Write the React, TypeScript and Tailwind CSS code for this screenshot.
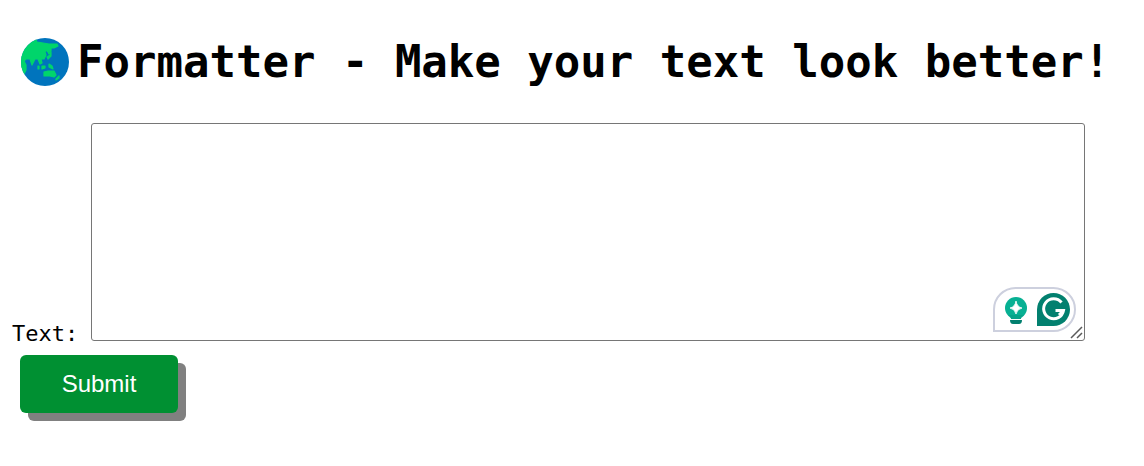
export default function App() {
  return (
    <main className="min-h-screen bg-white px-3 pt-8 text-black font-['DejaVu_Sans_Mono',monospace]">
      <h1 className="flex items-center gap-2 pl-[9px] text-[44px] leading-[60px] font-bold whitespace-nowrap">
        <svg className="size-12 shrink-0" viewBox="0 0 48 48" aria-hidden="true">
          <clipPath id="globe">
            <circle cx="24" cy="24" r="24" />
          </clipPath>
          <circle cx="24" cy="24" r="24" fill="#0074bd" />
          <g clipPath="url(#globe)" fill="#00d56b" stroke="#00d56b" strokeWidth="1.2" strokeLinejoin="round">
            <path d="M0 0H14L16 4L22 5L28 6L36 6L37 8L33 10L30 10L30 13L28 16L27 14L25 12L24 14L25 17L23 21L20 21L21 25L19 26L17 21L14 21L11 27L9 21L5 21L3 23L5 27L5 32L3 36L0 34Z" />
            <path d="M30 14L30 18L27 21L26 19L29 17Z" />
            <path d="M17 28H18V31H17ZM21 28H24V30L21 31ZM28 26L31 28L32 31L28 29Z" />
            <path d="M23 34L27 33L33 33L35 37L33 39L29 38L23 38Z" />
            <path d="M35 41L38 38L38 40L35 42Z" />
          </g>
        </svg>
        <span>Formatter - Make your text look better!</span>
      </h1>
      <form className="pt-[31px]" onSubmit={(event) => event.preventDefault()}>
        <div className="flex items-end pr-[47px]">
          <label htmlFor="text" className="w-[79px] shrink-0 text-[22px] leading-[14px]">
            Text:
          </label>
          <div className="relative flex-1">
            <textarea
              id="text"
              className="block h-[218px] w-full resize-none rounded-[3px] border border-[#767676] bg-white p-2 text-[22px] outline-none"
            />
            <div className="absolute right-[9px] bottom-[9px] flex h-[45px] w-[83px] items-center gap-[9px] rounded-t-[23px] rounded-br-[23px] border-2 border-[#cdd0de] bg-white pl-[9px]">
              <svg className="h-[28px] w-[24px]" viewBox="0 0 24 28" aria-hidden="true">
                <circle cx="12" cy="12" r="11" fill="#07b093" />
                <path d="M4 19H20Q17 20 17 23H7Q7 20 4 19Z" fill="#07a389" />
                <path d="M12 5Q13 11 18 12Q13 13 12 18Q11 13 6 12Q11 11 12 5Z" fill="white" stroke="white" strokeWidth="0.8" strokeLinejoin="round" />
                <path d="M6 24H18Q18 28 15 28H9Q6 28 6 24Z" fill="#02806f" />
              </svg>
              <svg className="size-[33px]" viewBox="0 0 33 33" aria-hidden="true">
                <path d="M0 33V16.500A16.500 16.500 0 1 1 16.500 33Z" fill="#02806f" />
                <path d="M24.500 9.500A10 10 0 1 0 26.500 17.500H18.500M22 22L26 18" fill="none" stroke="white" strokeWidth="3" />
              </svg>
            </div>
            <svg className="pointer-events-none absolute right-0 bottom-0 size-4" viewBox="0 0 16 16" aria-hidden="true">
              <path d="M2 13L13 2M8 13L13 8" fill="none" stroke="#5a5a5a" strokeWidth="1.500" />
            </svg>
          </div>
        </div>
        <button
          type="submit"
          className="mt-[14px] ml-2 h-[58px] w-[158px] cursor-pointer rounded-md bg-[#009032] font-['Liberation_Sans',sans-serif] text-2xl text-white shadow-[8px_8px_0_#808080]"
        >
          Submit
        </button>
      </form>
    </main>
  );
}
